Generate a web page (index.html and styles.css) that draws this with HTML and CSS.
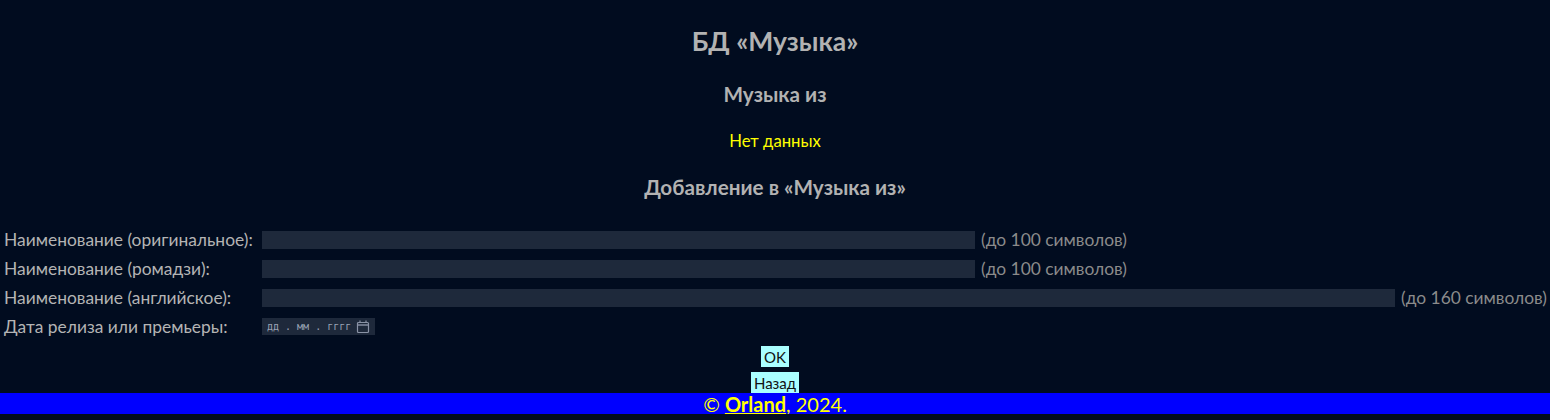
FILE: index.html
```html
<!DOCTYPE html>
<html lang="ru">
<head>
<meta charset="utf-8">
<title>БД «Музыка»</title>
<link rel="stylesheet" href="styles.css">
</head>
<body>
<main class="page">
  <h1 class="title">БД «Музыка»</h1>
  <h2 class="subtitle">Музыка из</h2>
  <p class="nodata">Нет данных</p>
  <h2 class="subtitle add">Добавление в «Музыка из»</h2>
  <form class="form">
    <div class="grid">
      <label class="lbl">Наименование (оригинальное):</label>
      <div class="cell"><input class="field w1" type="text"><span class="hint">(до 100 символов)</span></div>
      <label class="lbl">Наименование (ромадзи):</label>
      <div class="cell"><input class="field w1" type="text"><span class="hint">(до 100 символов)</span></div>
      <label class="lbl">Наименование (английское):</label>
      <div class="cell"><input class="field w2" type="text"><span class="hint">(до 160 символов)</span></div>
      <label class="lbl">Дата релиза или премьеры:</label>
      <div class="cell"><div class="date"><span class="date-text">дд . мм . гггг</span><svg class="cal" width="14" height="14" viewBox="0 0 14 14"><rect x="1.5" y="2.5" width="11" height="10" rx="1" fill="none" stroke="#8a93a6" stroke-width="1.2"/><line x1="1.5" y1="5" x2="12.5" y2="5" stroke="#8a93a6" stroke-width="1.4"/><line x1="4" y1="0.5" x2="4" y2="3" stroke="#8a93a6" stroke-width="1.2"/><line x1="10" y1="0.5" x2="10" y2="3" stroke="#8a93a6" stroke-width="1.2"/></svg></div></div>
    </div>
    <div class="buttons">
      <button type="button" class="btn">OK</button>
      <button type="button" class="btn">Назад</button>
    </div>
  </form>
</main>
<footer class="footer">© <a class="author" href="#">Orland</a>, 2024.</footer>
</body>
</html>
```
FILE: styles.css
```css
html, body {
  margin: 0;
  padding: 0;
  background: #010c1f;
}
body {
  font-family: Lato, "Noto Sans", "DejaVu Sans", sans-serif;
  font-size: 17.4px;
  color: #b4b4b4;
}
.page {
  display: flex;
  flex-direction: column;
  align-items: center;
}
.title {
  margin: 26px 0 0;
  font-size: 26.5px;
  line-height: 30px;
  font-weight: 700;
  color: #b2b2b2;
}
.subtitle {
  margin: 26px 0 0;
  font-size: 20.7px;
  line-height: 24px;
  font-weight: 700;
  color: #b2b2b2;
}
.nodata {
  margin: 25px 0 0;
  color: #ffff00;
  font-size: 16.7px;
  line-height: 20px;
}
.add {
  margin-top: 24px;
}
.form {
  align-self: stretch;
  display: flex;
  flex-direction: column;
  margin-top: 26px;
}
.grid {
  display: grid;
  grid-template-columns: 258px 1fr;
  grid-auto-rows: 29px;
  padding-left: 4px;
}
.lbl {
  display: flex;
  align-items: center;
  color: #b4b4b4;
  white-space: nowrap;
}
.cell {
  display: flex;
  align-items: center;
  gap: 6px;
}
.field {
  height: 18px;
  box-sizing: border-box;
  border: none;
  background: #1e293b;
  padding: 0 4px;
  color: #ccc;
  font: inherit;
}
.w1 { width: 713px; }
.w2 { width: 1133px; }
.hint {
  color: #8b8b8b;
  white-space: nowrap;
}
.date {
  width: 113px;
  height: 17px;
  box-sizing: border-box;
  background: #1e293b;
  display: flex;
  align-items: center;
  justify-content: space-between;
  padding: 0 5px 0 5px;
}
.date-text {
  font-family: "DejaVu Sans Mono", monospace;
  font-size: 10px;
  color: #9aa3b5;
  white-space: pre;
}
.cal { display: block; }
.buttons {
  display: flex;
  flex-direction: column;
  align-items: center;
  gap: 5px;
  margin-top: 5px;
}
.btn {
  background: #aaffff;
  border: none;
  padding: 0 3px;
  height: 21px;
  font-family: Lato, "Noto Sans", sans-serif;
  font-size: 15px;
  color: #111;
  cursor: pointer;
}
.footer {
  background: #0000ff;
  color: #ffff00;
  text-align: center;
  font-size: 20px;
  line-height: 22px;
  height: 21px;
}
.author {
  color: #ffff00;
  font-weight: 700;
  text-decoration: underline;
}
```
